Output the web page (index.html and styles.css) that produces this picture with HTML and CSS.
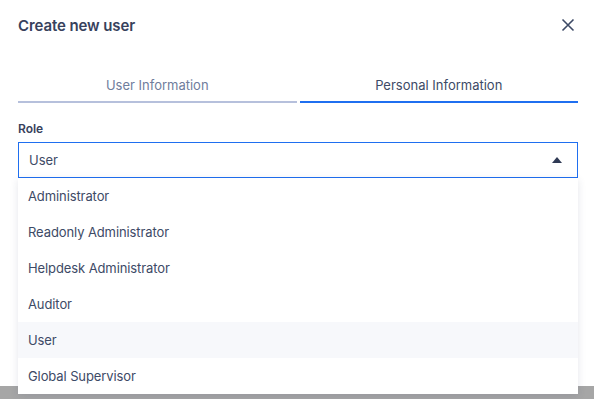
FILE: index.html
```html
<!DOCTYPE html>
<html>
<head>
<meta charset="utf-8">
<link rel="stylesheet" href="styles.css">
</head>
<body>
<div class="modal">
  <div class="header">
    <h1 class="title">Create new user</h1>
    <svg class="close" width="14" height="14" viewBox="0 0 14 14"><path d="M1.5 1.5L12.5 12.5M12.5 1.5L1.5 12.5" stroke="#3d4a66" stroke-width="1.6" fill="none"/></svg>
  </div>
  <div class="tabs">
    <div class="tab">User Information</div>
    <div class="tab active">Personal Information</div>
  </div>
  <div class="field">
    <label class="label">Role</label>
    <div class="select-wrap">
      <div class="select">
        <span>User</span>
        <svg class="caret" width="10" height="6" viewBox="0 0 10 6"><path d="M0 6L5 0L10 6Z" fill="#2f3a55"/></svg>
      </div>
      <ul class="menu">
        <li>Administrator</li>
        <li>Readonly Administrator</li>
        <li>Helpdesk Administrator</li>
        <li>Auditor</li>
        <li class="hover">User</li>
        <li>Global Supervisor</li>
      </ul>
    </div>
  </div>
</div>
</body>
</html>
```
FILE: styles.css
```css
html, body {
  margin: 0;
  padding: 0;
}
body {
  background: #a6a6a6;
  font-family: Inter, "Noto Sans", sans-serif;
  color: #3d4a66;
  width: 594px;
  height: 399px;
  overflow: hidden;
}
.modal {
  background: #fff;
  height: 386px;
  padding: 1px 16px 0 18px;
  box-sizing: border-box;
}
.header {
  display: flex;
  justify-content: space-between;
  align-items: center;
  height: 48px;
}
.title {
  margin: 0;
  font-size: 15px;
  font-weight: 600;
  color: #37415c;
  letter-spacing: -0.1px;
}
.close {
  margin-right: 3px;
}
.tabs {
  display: flex;
  gap: 3px;
  margin-top: 22px;
}
.tab {
  flex: 1;
  text-align: center;
  font-size: 13px;
  color: #6f7d9c;
  height: 30px;
  line-height: 28px;
  border-bottom: 2px solid #b6c0dc;
}
.tab.active {
  color: #3d4a66;
  border-bottom-color: #1f6ff0;
}
.field {
  margin-top: 18px;
}
.label {
  display: block;
  font-size: 12px;
  font-weight: 600;
  color: #37415c;
  margin-bottom: 6px;
}
.select-wrap {
  position: relative;
}
.select {
  height: 36px;
  box-sizing: border-box;
  border: 1px solid #1f6ff0;
  display: flex;
  align-items: center;
  justify-content: space-between;
  padding: 0 15px 0 10px;
  font-size: 13px;
  color: #3d4a66;
}
.menu {
  position: absolute;
  left: 0;
  right: 0;
  top: 36px;
  margin: 0;
  padding: 0;
  list-style: none;
  background: #fff;
  box-shadow: 0 2px 8px rgba(40, 50, 90, 0.12);
}
.menu li {
  height: 36px;
  line-height: 36px;
  padding-left: 10px;
  font-size: 13px;
  letter-spacing: -0.1px;
  color: #3d4a66;
}
.menu li.hover {
  background: #f7f8fb;
}
```
